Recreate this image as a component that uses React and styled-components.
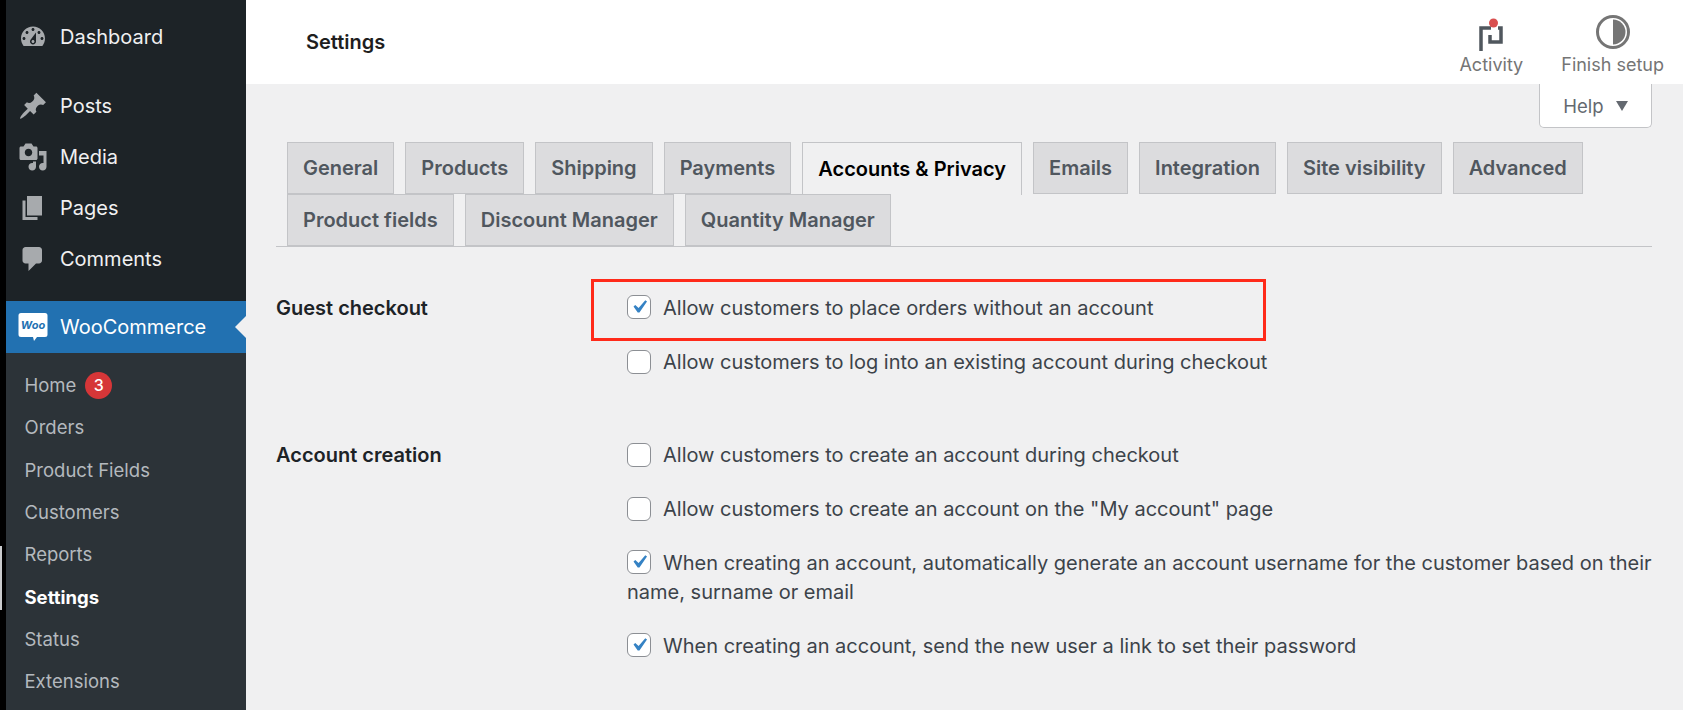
import React from 'react';
import styled, { createGlobalStyle } from 'styled-components';

const GlobalStyle = createGlobalStyle`
  html, body {
    margin: 0;
    height: 710px;
    overflow: hidden;
    background: #f0f0f1;
    font-family: Inter, 'Liberation Sans', sans-serif;
    -webkit-font-smoothing: antialiased;
  }
`;

const Page = styled.div`
  display: grid;
  grid-template-columns: 6px 240px 1fr;
  height: 710px;
`;

const EdgeStrip = styled.div`
  background: #000;
  position: relative;
`;

const ScrollThumb = styled.div`
  position: absolute;
  left: 0;
  top: 546px;
  width: 2px;
  height: 64px;
  background: #c9cacc;
`;

const Sidebar = styled.nav`
  background: #1d2327;
  display: flex;
  flex-direction: column;
  padding-top: 11px;
`;

const MenuItem = styled.a`
  display: flex;
  align-items: center;
  gap: 12px;
  height: ${p => p.$height || 51}px;
  margin-bottom: ${p => p.$gap || 0}px;
  padding-left: 12px;
  color: #f0f0f1;
  font-size: 20px;
  svg {
    flex: none;
    width: 30px;
    height: 30px;
    fill: #a7aaad;
  }
`;

const ActiveItem = styled(MenuItem)`
  position: relative;
  background: #2271b1;
  color: #fff;
  &::after {
    content: '';
    position: absolute;
    right: 0;
    top: 15px;
    border: 11px solid transparent;
    border-right-color: #f0f0f1;
    border-left-width: 0;
  }
`;

const SubMenu = styled.div`
  flex: 1;
  background: #2c3338;
  padding-top: 11px;
`;

const SubItem = styled.a`
  display: flex;
  align-items: center;
  gap: 9px;
  height: 42.3px;
  padding-left: 18.5px;
  color: ${p => (p.$current ? '#fff' : '#b4b9be')};
  font-size: 18.5px;
  font-weight: ${p => (p.$current ? 700 : 400)};
`;

const Badge = styled.span`
  display: flex;
  align-items: center;
  justify-content: center;
  width: 27px;
  height: 27px;
  border-radius: 50%;
  background: #d63638;
  color: #fff;
  font-size: 16px;
  font-weight: 500;
`;

const Main = styled.div`
  display: flex;
  flex-direction: column;
  min-width: 0;
`;

const Header = styled.header`
  display: flex;
  align-items: center;
  justify-content: space-between;
  height: 84px;
  background: #fff;
  padding: 0 19px 0 60px;
`;

const HeaderTitle = styled.h1`
  margin: 0;
  font-size: 20px;
  font-weight: 600;
  color: #1e1e1e;
`;

const HeaderActions = styled.div`
  display: flex;
  gap: 38px;
`;

const HeaderAction = styled.button`
  display: flex;
  flex-direction: column;
  align-items: center;
  gap: 2px;
  padding: 0;
  border: 0;
  background: none;
  font: inherit;
  font-size: 18px;
  color: #757575;
  svg {
    display: block;
  }
`;

const Content = styled.div`
  padding: 0 31px 0 30px;
`;

const HelpRow = styled.div`
  display: flex;
  justify-content: flex-end;
`;

const HelpButton = styled.button`
  display: flex;
  align-items: center;
  justify-content: center;
  gap: 12px;
  width: 113px;
  height: 44px;
  padding: 0;
  background: #fff;
  border: 1px solid #c3c4c7;
  border-top: 0;
  border-radius: 0 0 5px 5px;
  font: inherit;
  font-size: 18.5px;
  color: #646970;
  &::after {
    content: '';
    border: 6.5px solid transparent;
    border-top: 10px solid #646970;
    border-bottom: 0;
  }
`;

const TabBar = styled.div`
  display: flex;
  flex-wrap: wrap;
  margin-top: 14px;
  padding-left: 11px;
  border-bottom: 1px solid #c3c4c7;
`;

const Tab = styled.a`
  box-sizing: border-box;
  height: ${p => (p.$active ? 53 : 52)}px;
  margin-right: 11px;
  margin-bottom: ${p => (p.$active ? -1 : 0)}px;
  padding: 0 15px;
  display: flex;
  align-items: center;
  background: ${p => (p.$active ? '#f0f0f1' : '#dcdcde')};
  border: 1px solid #c3c4c7;
  border-bottom: ${p => (p.$active ? '0' : '1px solid #c3c4c7')};
  color: ${p => (p.$active ? '#000' : '#50575e')};
  font-size: 20px;
  font-weight: 600;
  white-space: nowrap;
`;

const Section = styled.section`
  display: grid;
  grid-template-columns: 351px 1fr;
  margin-top: ${p => p.$top}px;
`;

const SectionLabel = styled.div`
  font-size: 20px;
  font-weight: 600;
  line-height: 29px;
  color: #1d2327;
`;

const Options = styled.div`
  display: flex;
  flex-direction: column;
  gap: 25px;
`;

const Option = styled.label`
  position: relative;
  display: block;
  font-size: 20px;
  line-height: 29px;
  color: #3c434a;
`;

const Check = styled.span`
  box-sizing: border-box;
  display: inline-flex;
  align-items: center;
  justify-content: center;
  vertical-align: -5px;
  width: 24px;
  height: 24px;
  margin-right: 12px;
  background: #fff;
  border: 1px solid #8c8f94;
  border-radius: 6px;
  svg {
    width: 26px;
    height: 26px;
    flex: none;
    fill: #3582c4;
  }
`;

const Highlight = styled.div`
  position: absolute;
  left: -36px;
  top: -15px;
  box-sizing: border-box;
  width: 675px;
  height: 62px;
  border: 3px solid #ff2a1a;
  pointer-events: none;
`;

const DashboardIcon = () => (
  <svg viewBox="0 0 20 20">
    <path fillRule="evenodd" d="M3.76 16h12.48c1.1-1.37 1.76-3.11 1.76-5 0-4.42-3.58-8-8-8s-8 3.58-8 8c0 1.89.66 3.63 1.76 5zM10 4c.55 0 1 .45 1 1s-.45 1-1 1-1-.45-1-1 .45-1 1-1zM6 6c.55 0 1 .45 1 1s-.45 1-1 1-1-.45-1-1 .45-1 1-1zm8 0c.55 0 1 .45 1 1s-.45 1-1 1-1-.45-1-1 .45-1 1-1zm-5.37 5.55L12 7v6c0 1.1-.9 2-2 2s-2-.9-2-2c0-.57.24-1.08.63-1.45zM4 10c.55 0 1 .45 1 1s-.45 1-1 1-1-.45-1-1 .45-1 1-1zm12 0c.55 0 1 .45 1 1s-.45 1-1 1-1-.45-1-1 .45-1 1-1zm-5 3c0-.55-.45-1-1-1s-1 .45-1 1 .45 1 1 1 1-.45 1-1z" />
  </svg>
);

const PostsIcon = () => (
  <svg viewBox="0 0 20 20">
    <path d="M10.44 3.02l1.82-1.82 6.36 6.35-1.83 1.82c-1.05-.68-2.48-.57-3.41.36l-.75.75c-.92.93-1.04 2.35-.35 3.41l-1.83 1.82-2.41-2.41-2.8 2.79c-.42.42-3.38 2.71-3.8 2.29s1.86-3.39 2.28-3.81l2.79-2.79L4.1 9.36l1.83-1.82c1.05.69 2.48.57 3.4-.36l.75-.75c.93-.92 1.05-2.35.36-3.41z" />
  </svg>
);

const MediaIcon = () => (
  <svg viewBox="0 0 20 20">
    <path fillRule="evenodd" d="M13 11V4c0-.55-.45-1-1-1h-1.67L9 1H5L3.67 3H2c-.55 0-1 .45-1 1v7c0 .55.45 1 1 1h10c.55 0 1-.45 1-1zM7 4.5c1.38 0 2.5 1.12 2.5 2.5S8.38 9.5 7 9.5 4.5 8.38 4.5 7 5.62 4.5 7 4.5zM14 6h5v10.5c0 1.38-1.12 2.5-2.5 2.5S14 17.88 14 16.5s1.12-2.5 2.5-2.5c.17 0 .34.02.5.05V9h-3V6zm-4 8.05V13h2v3.5c0 1.38-1.12 2.5-2.5 2.5S7 17.88 7 16.5 8.12 14 9.5 14c.17 0 .34.02.5.05z" />
  </svg>
);

const PagesIcon = () => (
  <svg viewBox="0 0 20 20">
    <path d="M6 15V2h10v13H6zm-1 1h8v2H3V5h2v11z" />
  </svg>
);

const CommentsIcon = () => (
  <svg viewBox="0 0 20 20">
    <path d="M5 2h9c1.1 0 2 .9 2 2v7c0 1.1-.9 2-2 2h-2l-5 5v-5H5c-1.1 0-2-.9-2-2V4c0-1.1.9-2 2-2z" />
  </svg>
);

const WooIcon = () => (
  <svg viewBox="0 0 30 30">
    <path style={{ fill: '#fff' }} d="M3 1h24a2.5 2.5 0 0 1 2.500 2.500v19a2.500 2.500 0 0 1-2.500 2.500h-8l-3 4-1-4H3a2.500 2.500 0 0 1-2.500-2.500v-19A2.500 2.500 0 0 1 3 1z" />
    <text x="15" y="17" textAnchor="middle" fontSize="11" fontWeight="700" fontStyle="italic" fill="#2271b1" fontFamily="Inter, sans-serif">Woo</text>
  </svg>
);

const ActivityIcon = () => (
  <svg width="30" height="42" viewBox="0 0 30 42">
    <path d="M5 41V18h10M22 18h3v14H14v-7" fill="none" stroke="#50575e" strokeWidth="3.500" />
    <circle cx="17.500" cy="13" r="4.500" fill="#d94f4f" />
  </svg>
);

const SetupIcon = () => (
  <svg width="36" height="42" viewBox="0 0 36 42">
    <circle cx="18" cy="28" r="15.500" fill="#fff" stroke="#757575" strokeWidth="3" transform="translate(0 -6)" />
    <path d="M18 9.500a12.500 12.500 0 0 1 0 25z" fill="#757575" />
  </svg>
);

const CheckMark = () => (
  <svg viewBox="0 0 20 20">
    <path d="M14.830 4.890l1.340.940-5.810 8.380H9.020L5.780 9.670l1.340-1.250 2.570 2.400z" />
  </svg>
);

const OptionRow = ({ checked, highlight, children }) => (
  <Option>
    {highlight && <Highlight />}
    <Check>{checked && <CheckMark />}</Check>
    {children}
  </Option>
);

const topTabs = ['General', 'Products', 'Shipping', 'Payments', 'Accounts & Privacy', 'Emails', 'Integration', 'Site visibility', 'Advanced', 'Product fields', 'Discount Manager', 'Quantity Manager'];
const subItems = ['Orders', 'Product Fields', 'Customers', 'Reports'];

const App = () => (
  <Page>
    <GlobalStyle />
    <EdgeStrip>
      <ScrollThumb />
    </EdgeStrip>
    <Sidebar>
      <MenuItem $height={52} $gap={17}><DashboardIcon />Dashboard</MenuItem>
      <MenuItem><PostsIcon />Posts</MenuItem>
      <MenuItem><MediaIcon />Media</MenuItem>
      <MenuItem><PagesIcon />Pages</MenuItem>
      <MenuItem $height={52} $gap={16}><CommentsIcon />Comments</MenuItem>
      <ActiveItem $height={52}><WooIcon />WooCommerce</ActiveItem>
      <SubMenu>
        <SubItem>Home <Badge>3</Badge></SubItem>
        {subItems.map(item => <SubItem key={item}>{item}</SubItem>)}
        <SubItem $current>Settings</SubItem>
        <SubItem>Status</SubItem>
        <SubItem>Extensions</SubItem>
      </SubMenu>
    </Sidebar>
    <Main>
      <Header>
        <HeaderTitle>Settings</HeaderTitle>
        <HeaderActions>
          <HeaderAction><ActivityIcon />Activity</HeaderAction>
          <HeaderAction><SetupIcon />Finish setup</HeaderAction>
        </HeaderActions>
      </Header>
      <Content>
        <HelpRow>
          <HelpButton>Help</HelpButton>
        </HelpRow>
        <TabBar>
          {topTabs.map(tab => (
            <Tab key={tab} $active={tab === 'Accounts & Privacy'}>{tab}</Tab>
          ))}
        </TabBar>
        <Section $top={47}>
          <SectionLabel>Guest checkout</SectionLabel>
          <Options>
            <OptionRow checked highlight>Allow customers to place orders without an account</OptionRow>
            <OptionRow>Allow customers to log into an existing account during checkout</OptionRow>
          </Options>
        </Section>
        <Section $top={64}>
          <SectionLabel>Account creation</SectionLabel>
          <Options>
            <OptionRow>Allow customers to create an account during checkout</OptionRow>
            <OptionRow>Allow customers to create an account on the "My account" page</OptionRow>
            <OptionRow checked>When creating an account, automatically generate an account username for the customer based on their name, surname or email</OptionRow>
            <OptionRow checked>When creating an account, send the new user a link to set their password</OptionRow>
          </Options>
        </Section>
      </Content>
    </Main>
  </Page>
);

export default App;
